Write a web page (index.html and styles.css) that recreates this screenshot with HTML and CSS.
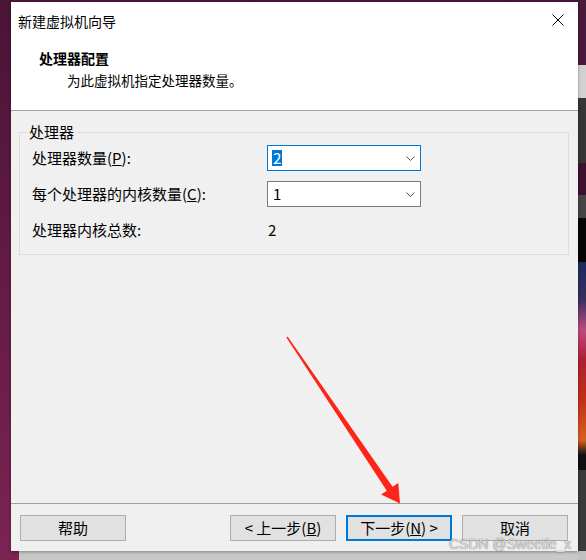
FILE: index.html
```html
<!DOCTYPE html>
<html lang="zh-CN">
<head>
<meta charset="utf-8">
<title>新建虚拟机向导</title>
<link rel="stylesheet" href="styles.css">
</head>
<body>
<div class="dialog">
  <header class="dlg-header">
    <div class="title-row">
      <span class="title">新建虚拟机向导</span>
      <svg class="close" width="12" height="12" viewBox="0 0 12 12"><path d="M0.5 0.5 L11.5 11.5 M11.5 0.5 L0.5 11.5" stroke="#000" stroke-width="1" fill="none"/></svg>
    </div>
    <div class="heading">处理器配置</div>
    <div class="subtitle">为此虚拟机指定处理器数量。</div>
  </header>
  <main class="dlg-body">
    <fieldset class="group">
      <legend class="group-label">处理器</legend>
      <div class="grid">
        <div class="label">处理器数量(<u>P</u>):</div>
        <div class="combo combo-focus"><span class="sel">2</span><svg class="chev" width="9" height="5" viewBox="0 0 9 5"><polyline points="0.5,0.5 4.5,4.5 8.5,0.5" stroke="#555" fill="none"/></svg></div>
        <div class="label">每个处理器的内核数量(<u>C</u>):</div>
        <div class="combo"><span class="val">1</span><svg class="chev" width="9" height="5" viewBox="0 0 9 5"><polyline points="0.5,0.5 4.5,4.5 8.5,0.5" stroke="#555" fill="none"/></svg></div>
        <div class="label">处理器内核总数:</div>
        <div class="value">2</div>
      </div>
    </fieldset>
  </main>
  <footer class="dlg-footer">
    <button class="btn">帮助</button>
    <div class="btn-group">
      <button class="btn">&lt; 上一步(<u>B</u>)</button>
      <button class="btn btn-default">下一步(<u>N</u>) &gt;</button>
      <button class="btn">取消</button>
    </div>
  </footer>
</div>
<svg class="arrow" width="586" height="560" viewBox="0 0 586 560">
  <polygon points="287.6,336.6 392.6,486.8 398.3,482.9 400,503.5 381.1,494.6 386.8,490.7 286.4,337.4" fill="#ff2418"/>
</svg>
<div class="watermark">CSDN @Sweetie_x</div>
</body>
</html>
```

FILE: styles.css
```css
html, body {
  margin: 0;
  padding: 0;
}
body {
  width: 586px;
  height: 560px;
  overflow: hidden;
  position: relative;
  font-family: "Noto Sans CJK SC", "Noto Sans", sans-serif;
  background:
    linear-gradient(#c8c8c8, #c8c8c8) 19px 551px / 559px 9px no-repeat,
    linear-gradient(to bottom,
      #4a1a3a 0, #4a1a3a 65px,
      #d2d2d2 65px, #d2d2d2 98px,
      #363636 98px, #363636 163px,
      #3c1230 163px, #3c1230 195px,
      #454545 195px, #454545 218px,
      #060606 218px, #060606 262px,
      #1a2a5a 262px, #3a3060 300px,
      #c04a80 330px, #b01e34 360px,
      #c23018 400px, #d86020 440px,
      #101010 455px, #101010 470px,
      #3a3a3a 470px, #3a3a3a 551px,
      #c0c0c0 551px) 578px 0 / 8px 560px no-repeat,
    linear-gradient(to bottom, #4a1437, #7c2352);
}
.dialog {
  margin: 2px 0 0 11px;
  width: 567px;
  height: 549px;
  background: #f0f0f0;
  display: flex;
  flex-direction: column;
  box-shadow: 0 1px 3px rgba(0,0,0,0.35);
}
.dlg-header {
  box-sizing: border-box;
  height: 109px;
  background: #fff;
  border-bottom: 1px solid #a0a0a0;
  padding: 9px 14px 0 7px;
}
.title-row {
  display: flex;
  justify-content: space-between;
  align-items: flex-start;
  height: 20px;
}
.title {
  font-size: 14px;
  line-height: 20px;
  color: #000;
}
.close {
  display: block;
  margin-top: 3px;
}
.heading {
  margin: 17px 0 0 21px;
  font-size: 14px;
  font-weight: bold;
  line-height: 20px;
  color: #000;
}
.subtitle {
  margin: 2px 0 0 49px;
  font-size: 13.5px;
  line-height: 20px;
  color: #000;
}
.dlg-body {
  flex: 1;
}
.group {
  margin: 11px 9px 0 8px;
  padding: 3px 8px 11px 12px;
  border: 1px solid #dcdcdc;
  min-width: 0;
}
.group-label {
  margin-left: -5px;
  padding: 0 2px;
  font-size: 15px;
  line-height: 20px;
  color: #000;
}
.grid {
  display: grid;
  grid-template-columns: 235px 154px;
  grid-template-rows: 26px 26px 26px;
  row-gap: 10px;
  align-items: center;
}
.label, .value {
  font-size: 15px;
  line-height: 20px;
  color: #000;
  white-space: nowrap;
}
.value {
  padding-left: 1px;
}
.combo {
  box-sizing: border-box;
  height: 26px;
  background: #fff;
  border: 1px solid #7a7a7a;
  display: flex;
  align-items: center;
  justify-content: space-between;
  padding: 0 5px 0 4px;
  font-size: 15px;
}
.combo-focus {
  border-color: #0078d7;
}
.sel {
  background: #0078d7;
  color: #fff;
  line-height: 16px;
  padding: 0 1px;
}
.val {
  line-height: 16px;
  padding-left: 1px;
  color: #000;
}
.chev {
  display: block;
}
.dlg-footer {
  border-top: 1px solid #a0a0a0;
  padding: 11px 10px 10px 9px;
  display: flex;
  justify-content: space-between;
}
.btn-group {
  display: flex;
  gap: 10px;
}
.btn {
  box-sizing: border-box;
  width: 106px;
  height: 26px;
  margin: 0;
  padding: 0;
  background: #e1e1e1;
  border: 1px solid #adadad;
  font-family: "Noto Sans CJK SC", "Noto Sans", sans-serif;
  font-size: 15px;
  line-height: 22px;
  color: #000;
}
.btn-default {
  border: 2px solid #0078d7;
}
.arrow {
  position: absolute;
  left: 0;
  top: 0;
  pointer-events: none;
}
.watermark {
  position: absolute;
  left: 449px;
  top: 537px;
  font-family: "Liberation Sans", Arial, sans-serif;
  font-size: 14px;
  line-height: 15px;
  color: rgba(235,235,235,0.9);
  text-shadow: 0 0 1px rgba(40,40,40,0.9);
  white-space: nowrap;
}
```
